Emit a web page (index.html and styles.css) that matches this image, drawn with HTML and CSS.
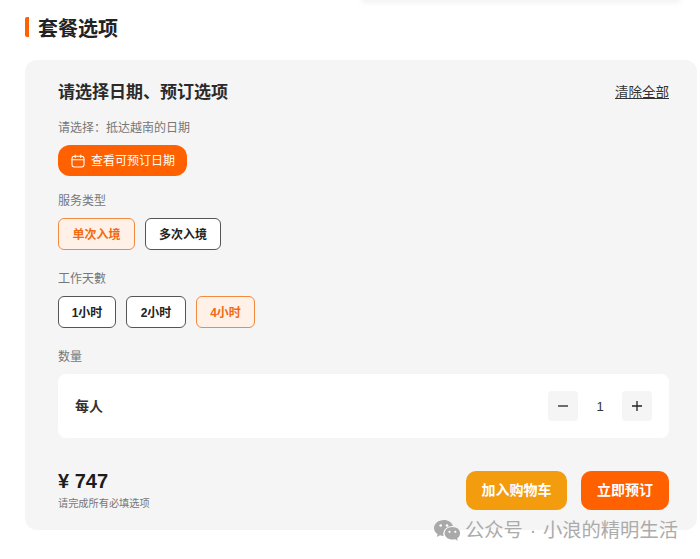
FILE: index.html
```html
<!DOCTYPE html>
<html lang="zh-CN">
<head>
<meta charset="utf-8">
<title>套餐选项</title>
<link rel="stylesheet" href="styles.css">
</head>
<body>
<div class="top-shadow"></div>
<main class="page">
  <h1 class="heading">套餐选项</h1>
  <section class="card">
    <div class="card-head">
      <h2 class="card-title">请选择日期、预订选项</h2>
      <a class="clear">清除全部</a>
    </div>
    <p class="label label-date">请选择：抵达越南的日期</p>
    <button class="date-btn">
      <svg class="cal" width="14" height="14" viewBox="0 0 14 14" fill="none" stroke="#fff" stroke-width="1.1" stroke-linecap="round"><rect x="1" y="2.2" width="12" height="10.8" rx="2.4"/><path d="M1 5.8h12M4.2 1v2.4M9.8 1v2.4"/></svg>
      <span class="date-text">查看可预订日期</span>
    </button>
    <p class="label label-group">服务类型</p>
    <div class="options">
      <button class="opt opt-a selected">单次入境</button>
      <button class="opt opt-a">多次入境</button>
    </div>
    <p class="label label-group">工作天數</p>
    <div class="options">
      <button class="opt opt-b">1小时</button>
      <button class="opt opt-c">2小时</button>
      <button class="opt opt-d selected">4小时</button>
    </div>
    <p class="label label-group">数量</p>
    <div class="qty">
      <span class="qty-name">每人</span>
      <div class="stepper">
        <button class="step"><svg width="12" height="12" viewBox="0 0 12 12" stroke="#222" stroke-width="1.3"><path d="M1 6h10"/></svg></button>
        <span class="count">1</span>
        <button class="step"><svg width="12" height="12" viewBox="0 0 12 12" stroke="#222" stroke-width="1.3"><path d="M1 6h10M6 1v10"/></svg></button>
      </div>
    </div>
    <div class="foot">
      <div class="price-box">
        <div class="price">¥ 747</div>
        <div class="hint">请完成所有必填选项</div>
      </div>
      <div class="actions">
        <button class="cta cart">加入购物车</button>
        <button class="cta book">立即预订</button>
      </div>
    </div>
  </section>
</main>
<div class="watermark">
  <svg width="27" height="22" viewBox="0 0 27 22" fill="#a9a9a9"><path d="M10 0C4.5 0 0 3.6 0 8c0 2.5 1.4 4.7 3.6 6.1L2.8 17l3.2-1.7c1.2.4 2.4.6 3.7.6-.3-.8-.4-1.500-.4-2.300 0-4.300 4.100-7.700 9.100-7.700h.6C17.900 2.500 14.300 0 10 0z"/><path d="M18.400 7C14 7 10.600 9.800 10.600 13.300s3.400 6.300 7.800 6.300c1 0 1.900-.1 2.800-.4l2.600 1.500-.7-2.400c1.800-1.200 2.900-2.900 2.900-4.900C26.500 9.800 22.800 7 18.400 7z"/><circle cx="6.700" cy="5.500" r="1.300" fill="#fff"/><circle cx="13" cy="5.500" r="1.300" fill="#fff"/><circle cx="15.500" cy="11.800" r="1.100" fill="#fff"/><circle cx="21.300" cy="11.800" r="1.100" fill="#fff"/></svg>
  <span>公众号 · 小浪的精明生活</span>
</div>
</body>
</html>
```

FILE: styles.css
```css
* { box-sizing: border-box; }
html, body { margin: 0; padding: 0; }
body {
  position: relative;
  width: 700px;
  height: 559px;
  overflow: hidden;
  background: #fff;
  color: #222;
  font-family: "Liberation Sans", "Noto Sans CJK SC", sans-serif;
}
button { font-family: inherit; cursor: pointer; padding: 0; }
p, h1, h2 { margin: 0; }

.top-shadow {
  position: absolute;
  left: 362px;
  top: -6px;
  width: 318px;
  height: 6px;
  box-shadow: 0 2px 6px rgba(0, 0, 0, .07);
}

.page { padding: 17px 3px 0 25px; }

.heading {
  height: 20px;
  padding-left: 9px;
  border-left: 4px solid #ff6000;
  border-radius: 2px;
  font-size: 20px;
  line-height: 25px;
  font-weight: 700;
  color: #222;
}

.card {
  margin-top: 23px;
  height: 470px;
  padding: 21px 28px 0 33px;
  background: #f5f5f5;
  border-radius: 12px;
}

.card-head {
  display: flex;
  justify-content: space-between;
  align-items: center;
  height: 24px;
}
.card-title { font-size: 17px; line-height: 24px; font-weight: 700; color: #2a2a2a; }
.clear { font-size: 13.5px; line-height: 18px; color: #333; text-decoration: underline; }

.label { font-size: 12px; line-height: 16px; color: #777; }
.label-date { margin-top: 15px; }
.label-group { margin-top: 21px; }
.label-date + .date-btn { margin-top: 9px; }

.date-btn {
  display: flex;
  align-items: center;
  gap: 6px;
  width: 129px;
  height: 31px;
  padding-left: 13px;
  border: 0;
  border-radius: 12px;
  background: #ff6000;
  color: #fff;
  font-size: 12px;
}
.date-text { margin-bottom: 2px; }
.cal { flex: none; }
.date-btn + .label-group { margin-top: 17px; }

.options { display: flex; gap: 10px; margin-top: 10px; }
.label-group + .options { margin-top: 9px; }
.opt {
  height: 32px;
  padding-bottom: 2px;
  background: #fff;
  border: 1px solid #555;
  border-radius: 6px;
  color: #222;
  font-size: 12px;
  font-weight: 700;
}
.opt.selected { background: #fff1e7; border-color: #f28a3f; color: #f26a12; }
.opt-a { width: 77px; }
.opt-a + .opt-a { width: 76px; }
.opt-b { width: 58px; }
.opt-c { width: 60px; }
.opt-d { width: 59px; }

.qty {
  display: flex;
  justify-content: space-between;
  align-items: center;
  height: 64px;
  margin-top: 9px;
  padding: 0 17px;
  background: #fff;
  border-radius: 8px;
}
.qty-name { font-size: 14px; font-weight: 700; color: #333; padding-bottom: 2px; }
.stepper { display: flex; align-items: center; }
.step {
  display: flex;
  align-items: center;
  justify-content: center;
  width: 30px;
  height: 30px;
  border: 0;
  border-radius: 4px;
  background: #f5f5f5;
}
.count { width: 44px; text-align: center; font-size: 13px; color: #333; }

.foot {
  display: flex;
  justify-content: space-between;
  margin-top: 33px;
}
.price { font-size: 20px; line-height: 21px; font-weight: 700; color: #1c1c1c; }
.hint { margin-top: 5px; font-size: 10.2px; line-height: 14px; color: #777; }
.actions { display: flex; gap: 14px; }
.cta {
  height: 39px;
  padding-bottom: 3px;
  border: 0;
  border-radius: 10px;
  color: #fff;
  font-size: 14px;
  font-weight: 700;
}
.cart { width: 101px; background: #f29c0e; }
.book { width: 88px; background: #ff6000; }

.watermark {
  position: absolute;
  left: 434px;
  top: 518px;
  display: flex;
  align-items: center;
  gap: 4px;
  color: #ababab;
  font-size: 19.3px;
  word-spacing: 1.5px;
  line-height: 26px;
  white-space: nowrap;
}
```
